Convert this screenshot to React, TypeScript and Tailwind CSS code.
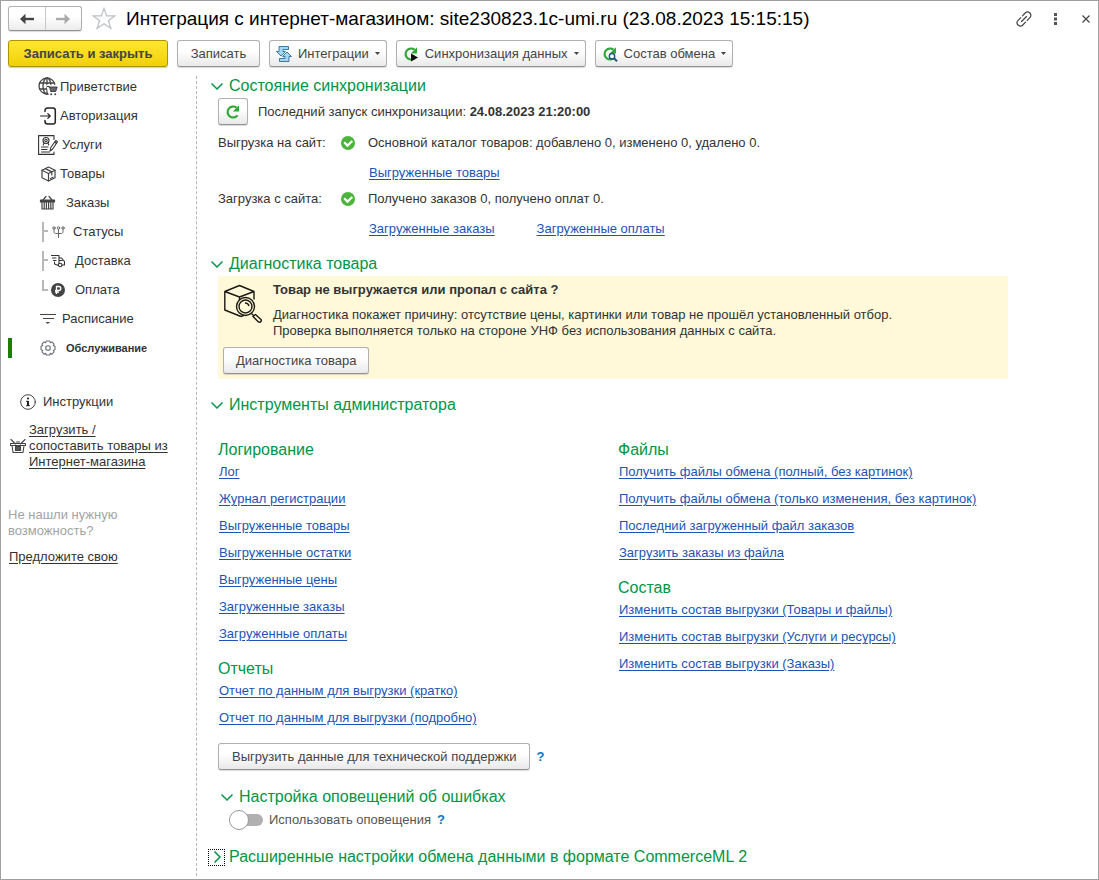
import { useState } from 'react';
import type { ReactNode } from 'react';
import { clsx } from 'clsx';

interface NavItem {
  label: string;
  icon: ReactNode;
  gap: string;
  level?: 'middle' | 'last';
  active?: boolean;
}

const iconProps = { fill: 'none', stroke: '#444', strokeLinecap: 'round', strokeLinejoin: 'round' } as const;

function GlobeCartIcon() {
  return (
    <svg className="h-5 w-5" viewBox="0 0 20 20" {...iconProps} strokeWidth={1.3} aria-hidden="true">
      <circle cx="9" cy="9" r="8" />
      <ellipse cx="9" cy="9" rx="4" ry="8" />
      <path d="M9 1v16M1.500 6h15M1.500 12h15" />
      <path d="M9 8.500h11.500v8H11z" fill="#fff" stroke="#fff" />
      <path d="M9.500 9.500h2l1.200 5h5l1.500-4.500h-6.500z" fill="#666" strokeWidth={1} />
      <circle cx="13.200" cy="17.300" r="1" fill="#444" stroke="none" />
      <circle cx="17.200" cy="17.300" r="1" fill="#444" stroke="none" />
    </svg>
  );
}

function LoginIcon() {
  return (
    <svg className="h-5 w-5" viewBox="0 0 20 20" {...iconProps} stroke="#222" strokeWidth={1.5} aria-hidden="true">
      <path d="M7 5.500V4.500A2.500 2.500 0 0 1 9.500 2H15a2.300 2.300 0 0 1 2.300 2.300v11.400A2.300 2.300 0 0 1 15 18H9.500A2.500 2.500 0 0 1 7 15.500v-1" />
      <path d="M2.500 10H12M9.800 7.600l2.400 2.400-2.400 2.400" strokeWidth={1.200} />
    </svg>
  );
}

function ServicesIcon() {
  return (
    <svg className="h-5 w-5" viewBox="0 0 20 20" {...iconProps} stroke="#333" strokeWidth={1.100} aria-hidden="true">
      <path d="M16 4.500V.6H.6v18.800H16V17" />
      <circle cx="8" cy="5.500" r="3" />
      <circle cx="8" cy="5.500" r="1.200" />
      <path d="M6 8.200 5.200 10M10 8.200l.8 1.800M3.500 12h6.500M3.500 14.500h5.500M3.500 17h8" />
      <path d="m12 16 .8-3.500 5-7 1.700 1.200-5 7.500z" fill="#fff" />
      <path d="m16.600 7 1.800 1.300" />
    </svg>
  );
}

function BoxIcon() {
  return (
    <svg className="h-5 w-5" viewBox="0 0 20 20" {...iconProps} strokeWidth={1.200} aria-hidden="true">
      <path d="m10.500 3 6.500 3.200v7.500L10.500 17 4 13.700V6.200z" />
      <path d="m4 6.200 6.500 3.300L17 6.200M10.500 9.500V17M7.300 4.600l6.500 3.300v3M12.500 14.500l2.500-1.300" />
    </svg>
  );
}

function BasketIcon() {
  return (
    <svg className="h-5 w-5" viewBox="0 0 20 20" {...iconProps} strokeWidth={1.200} aria-hidden="true">
      <path d="m5 7 3-3.500M14 7l-3-3.500" />
      <path d="M2.500 7h14v2h-14z" fill="#444" />
      <path d="M4 9v7h11V9M6.200 9v7M8.400 9v7M10.600 9v7M12.800 9v7" />
    </svg>
  );
}

function StatusesIcon() {
  return (
    <svg className="h-3.5 w-3.5" viewBox="0 0 14 14" {...iconProps} stroke="#666" strokeWidth={1} aria-hidden="true">
      <circle cx="3" cy="3" r="1.200" />
      <circle cx="7.500" cy="3" r="1.200" />
      <circle cx="12" cy="3" r="1.200" />
      <path d="M3 4.500v2c0 1.500 1 2 2 2h5c1 0 2-.5 2-2v-2M7.500 4.500v8" />
    </svg>
  );
}

function DeliveryIcon() {
  return (
    <svg className="h-3.5 w-3.5" viewBox="0 0 14 14" {...iconProps} stroke="#333" strokeWidth={1.100} aria-hidden="true">
      <path d="M.5 1.500h7.500v8M1.500 4h3.500M2.500 6.500H5M8 4h2.500l3 3.500v3.500h-2.500M8.300 6.500h3M3.500 8v2l4 1.500" />
      <circle cx="9.200" cy="11" r="1.800" />
    </svg>
  );
}

function RubleIcon() {
  return (
    <svg className="h-3.5 w-3.5" viewBox="0 0 14 14" aria-hidden="true">
      <circle cx="7" cy="7" r="7" fill="#444" />
      <path d="M5.500 11V3.500h2.300a2 2 0 0 1 0 4H4M4 9.200h4" fill="none" stroke="#fff" strokeWidth="1.300" />
    </svg>
  );
}

function ScheduleIcon() {
  return (
    <svg className="h-5 w-5" viewBox="0 0 20 20" {...iconProps} strokeLinecap="butt" strokeWidth={1.200} aria-hidden="true">
      <path d="M2 5.500h16M5 9.500h11" />
      <path d="M7.500 13h4.500l-2.200 2z" fill="#444" stroke="none" />
    </svg>
  );
}

function GearIcon() {
  return (
    <svg className="h-5 w-5" viewBox="0 0 20 20" {...iconProps} stroke="#6b6f76" strokeWidth={1.100} aria-hidden="true">
      <path d="M8.200 3h3.600l.5 1.700 1.600-.8 2.200 2.200-.8 1.600 1.700.5v3.600l-1.700.5.8 1.600-2.200 2.200-1.600-.8-.5 1.700H8.200l-.5-1.700-1.600.8-2.200-2.200.8-1.600L3 11.800V8.200l1.700-.5-.8-1.600 2.200-2.200 1.600.8z" />
      <circle cx="10" cy="10" r="2.300" />
    </svg>
  );
}

function InfoIcon() {
  return (
    <svg className="h-4 w-4" viewBox="0 0 16 16" {...iconProps} strokeWidth={1} aria-hidden="true">
      <circle cx="8" cy="8" r="7.300" />
      <path d="M8 7v5" stroke="#222" strokeWidth={2} strokeLinecap="butt" />
      <path d="M6.500 7.300H8M6.500 11.700h3" stroke="#222" />
      <circle cx="8" cy="4.500" r="1.100" fill="#222" stroke="none" />
    </svg>
  );
}

function OpenBasketIcon() {
  return (
    <svg className="h-4 w-4 shrink-0" viewBox="0 0 16 16" {...iconProps} strokeWidth={1.100} aria-hidden="true">
      <path d="m1 1.500 4.500 4.500M15 1.500l-4.500 4.500M.5 5.500h15v2H.5zM2 7.500l1 7h10l1-7" />
      <path d="M5.500 8.500h5v4h-5z" fill="#555" />
      <path d="M6.500 4h3" />
    </svg>
  );
}

function RefreshIcon({ children }: { children?: ReactNode }) {
  return (
    <svg className="h-4 w-4" viewBox="0 0 16 16" aria-hidden="true">
      <path d="M12.500 11.300A5.500 5.500 0 1 1 11.500 3.700" fill="none" stroke="#2ea836" strokeWidth="2.200" />
      <path d="M14 1.200v6.300H7.800z" fill="#2ea836" />
      {children}
    </svg>
  );
}

function IntegrationIcon() {
  return (
    <svg className="h-[18px] w-4" viewBox="0 0 16 18" aria-hidden="true" fill="#a5d6f2" stroke="#2f6d94" strokeWidth=".9">
      <path d="M3 1.500h9.500v3H7V6.500h2.500L5 11 .5 6.500H3z" />
      <path d="M13 16.500H3.500v-3H9v-2H6.500L11 7l4.500 4.500H13z" />
    </svg>
  );
}

function CheckIcon() {
  return (
    <svg className="h-3.5 w-3.5" viewBox="0 0 14 14" aria-hidden="true">
      <circle cx="7" cy="7" r="7" fill="#4db53c" />
      <path d="m3.200 6.300 3.300 3.300L11.300 5" fill="none" stroke="#fff" strokeWidth="2.200" />
    </svg>
  );
}

function BoxSearchIcon() {
  return (
    <svg className="h-10 w-10 shrink-0" viewBox="0 0 40 40" fill="none" stroke="#1c1a12" strokeWidth="1.400" strokeLinejoin="round" aria-hidden="true">
      <path d="M18 32.500 1.800 26V7.500L16.500 1.500l14.500 6v8M1.800 7.500 16.500 13 31 7.500M16.500 13v3M18 32.500l3-1.200" />
      <circle cx="22.500" cy="22.500" r="9" />
      <circle cx="22.500" cy="22.500" r="6.500" />
      <path d="M22 19c2 0 3.500 1 4 3M28.500 29.500l2.500 2.500" />
      <path d="m30 32.500 2.500-2 5.500 5c1 1.500-1 3.500-2.500 2.500z" />
    </svg>
  );
}

function TreeBranch({ last }: { last: boolean }) {
  return (
    <svg className="h-5 w-[9px]" viewBox="0 0 9 20" fill="none" stroke="#b8b8b8" strokeWidth="2" aria-hidden="true">
      <path d={last ? 'M1 0v10h5' : 'M1 0v20M1 9h5'} />
    </svg>
  );
}

const NAV: NavItem[] = [
  { label: 'Приветствие', icon: <GlobeCartIcon />, gap: 'gap-0.5' },
  { label: 'Авторизация', icon: <LoginIcon />, gap: 'gap-0.5' },
  { label: 'Услуги', icon: <ServicesIcon />, gap: 'gap-1' },
  { label: 'Товары', icon: <BoxIcon />, gap: 'gap-0.5' },
  { label: 'Заказы', icon: <BasketIcon />, gap: 'gap-2' },
  { label: 'Статусы', icon: <StatusesIcon />, gap: 'gap-2', level: 'middle' },
  { label: 'Доставка', icon: <DeliveryIcon />, gap: 'gap-2.5', level: 'middle' },
  { label: 'Оплата', icon: <RubleIcon />, gap: 'gap-2.5', level: 'last' },
  { label: 'Расписание', icon: <ScheduleIcon />, gap: 'gap-1' },
  { label: 'Обслуживание', icon: <GearIcon />, gap: 'gap-2', active: true },
];

const LOGS = ['Лог', 'Журнал регистрации', 'Выгруженные товары', 'Выгруженные остатки', 'Выгруженные цены', 'Загруженные заказы', 'Загруженные оплаты'];
const REPORTS = ['Отчет по данным для выгрузки (кратко)', 'Отчет по данным для выгрузки (подробно)'];
const FILES = [
  'Получить файлы обмена (полный, без картинок)',
  'Получить файлы обмена (только изменения, без картинок)',
  'Последний загруженный файл заказов',
  'Загрузить заказы из файла',
];
const CONTENTS = ['Изменить состав выгрузки (Товары и файлы)', 'Изменить состав выгрузки (Услуги и ресурсы)', 'Изменить состав выгрузки (Заказы)'];

function Button({ children, className, menu, label }: { children: ReactNode; className?: string; menu?: boolean; label?: string }) {
  return (
    <button
      type="button"
      aria-label={label}
      aria-haspopup={menu ? 'menu' : undefined}
      className={clsx(
        'flex h-[27px] items-center justify-center rounded-[3px] border border-[#b0b0b0] border-b-[#929292] bg-linear-to-b from-white from-40% to-[#e9e9e9] text-[13px] text-[#444] shadow-[0_1px_1px_#00000026] whitespace-nowrap cursor-pointer',
        className,
      )}
    >
      {children}
      {menu && (
        <svg className="ml-1.5 h-[3px] w-[5px]" viewBox="0 0 5 3" aria-hidden="true">
          <path d="M0 0h5L2.500 3z" fill="#444" />
        </svg>
      )}
    </button>
  );
}

function Link({ children }: { children: ReactNode }) {
  return (
    <a href="#" className="text-[#1b54b5] underline underline-offset-2">
      {children}
    </a>
  );
}

function LinkGroup({ title, links }: { title: string; links: string[] }) {
  return (
    <section>
      <h3 className="text-base leading-4 text-[#009646]">{title}</h3>
      <ul className="pl-px">
        {links.map(text => (
          <li key={text} className="leading-[27px]">
            <Link>{text}</Link>
          </li>
        ))}
      </ul>
    </section>
  );
}

interface SectionProps {
  title: string;
  children?: ReactNode;
  className?: string;
  defaultOpen?: boolean;
  focused?: boolean;
}

function Section({ title, children, className, defaultOpen = true, focused = false }: SectionProps) {
  const [open, setOpen] = useState(defaultOpen);

  return (
    <section className={className}>
      <h2 className="text-base leading-5 text-[#009646]">
        <button type="button" aria-expanded={open} onClick={() => setOpen(!open)} className="flex items-center gap-1 text-left cursor-pointer">
          <span className={clsx('flex size-[17px] items-center justify-center', focused && 'border border-dotted border-black')}>
            <svg className={clsx('h-3 w-3 shrink-0', !open && '-rotate-90')} viewBox="0 0 12 12" fill="none" stroke="#009646" strokeWidth="1.500" aria-hidden="true">
              <path d="m.5 3.500 5.500 5.500 5.500-5.500" />
            </svg>
          </span>
          {title}
        </button>
      </h2>
      {open && children}
    </section>
  );
}

function Header() {
  return (
    <header className="flex items-center pt-[5px] pr-2 pl-[7px]">
      <div className="flex h-[25px] w-[74px] shrink-0 rounded-[3px] border border-[#b0b0b0] border-b-[#929292] bg-linear-to-b from-white from-40% to-[#ececec] shadow-[0_1px_1px_#00000026]">
        <button type="button" aria-label="Назад" className="flex flex-1 items-center justify-center border-r border-[#c8c8c8] cursor-pointer">
          <svg className="h-3 w-4" viewBox="0 0 16 12" fill="none" stroke="#444" strokeWidth="2.400" aria-hidden="true">
            <path d="M15 6H3" />
            <path d="M6.500.8v10.400L1 6z" fill="#444" stroke="none" />
          </svg>
        </button>
        <button type="button" aria-label="Вперед" className="flex flex-1 items-center justify-center cursor-pointer">
          <svg className="h-3 w-4" viewBox="0 0 16 12" fill="none" stroke="#aaa" strokeWidth="2.400" aria-hidden="true">
            <path d="M1 6h12" />
            <path d="M9.500.8v10.400L15 6z" fill="#aaa" stroke="none" />
          </svg>
        </button>
      </div>
      <button type="button" aria-label="В избранное" className="ml-2.5 cursor-pointer">
        <svg className="h-6 w-6" viewBox="0 0 24 24" fill="none" stroke="#bcc0c4" strokeWidth="1.200" aria-hidden="true">
          <path d="m12 1.500 2.700 7.300h8.300l-6.600 4.900 2.500 7.600L12 16.800l-6.900 4.500 2.500-7.600L1 8.800h8.300z" />
        </svg>
      </button>
      <h1 className="ml-2.5 flex-1 text-[19px] leading-[25px] text-black">Интеграция с интернет-магазином: site230823.1c-umi.ru (23.08.2023 15:15:15)</h1>
      <div className="flex items-center gap-5">
        <button type="button" aria-label="Получить ссылку" className="cursor-pointer">
          <svg className="h-4 w-4" viewBox="0 0 16 16" fill="none" stroke="#444" strokeWidth="1.200" strokeLinecap="round" aria-hidden="true">
            <path d="M6.500 4.800 9.200 2a3.300 3.300 0 0 1 4.700 4.700l-2.700 2.700M9.500 11.200 6.800 14a3.300 3.300 0 0 1-4.700-4.700l2.700-2.700M5.500 10.500l5-5" />
          </svg>
        </button>
        <button type="button" aria-label="Ещё" className="pr-[5px] pl-0.5 cursor-pointer">
          <svg className="h-3 w-[3px]" viewBox="0 0 3 12" fill="#555" aria-hidden="true">
            <path d="M0 0h3v3H0zM0 4.500h3v3H0zM0 9h3v3H0z" />
          </svg>
        </button>
        <button type="button" aria-label="Закрыть" className="cursor-pointer">
          <svg className="h-2 w-2" viewBox="0 0 8 8" stroke="#444" strokeWidth="1.200" aria-hidden="true">
            <path d="m.5.5 7 7M7.500.5l-7 7" />
          </svg>
        </button>
      </div>
    </header>
  );
}

function Toolbar() {
  return (
    <div className="mt-[9px] flex flex-wrap gap-[9px] px-[7px]">
      <button
        type="button"
        className="h-[27px] w-40 rounded-[3px] border border-[#a89600] bg-linear-to-b from-[#ffe72e] to-[#f0d000] text-[13px] font-bold text-[#444] shadow-[0_1px_1px_#00000033] cursor-pointer"
      >
        Записать и закрыть
      </button>
      <Button className="w-[83px]">Записать</Button>
      <Button menu className="px-1.5">
        <IntegrationIcon />
        <span className="ml-1.5">Интеграции</span>
      </Button>
      <Button menu className="px-1.5">
        <RefreshIcon>
          <path d="m8 7.500 7 4-7 4z" fill="#111" />
        </RefreshIcon>
        <span className="ml-1.5">Синхронизация данных</span>
      </Button>
      <Button menu className="px-1.5">
        <RefreshIcon>
          <circle cx="10" cy="10.200" r="2.700" fill="#fff" stroke="#1d5580" strokeWidth="1.400" />
          <path d="m12 12.200 3 3" stroke="#1d5580" strokeWidth="2" />
        </RefreshIcon>
        <span className="ml-1.5">Состав обмена</span>
      </Button>
    </div>
  );
}

function Sidebar() {
  return (
    <aside className="w-[196px] shrink-0 border-r border-dashed border-[#b5b5b5] pl-[7px]">
      <nav className="-mt-1">
        <ul>
          {NAV.map(item => (
            <li key={item.label} className="flex h-[29px] items-center">
              <span className={clsx('h-5 w-1', item.active && 'bg-[#1f7d00]')} />
              <a href="#" aria-current={item.active ? 'page' : undefined} className={clsx('flex items-center', item.gap, item.level ? 'ml-[30px]' : 'ml-[26px]')}>
                {item.level ? (
                  <span className="flex items-center">
                    <TreeBranch last={item.level === 'last'} />
                    {item.icon}
                  </span>
                ) : (
                  item.icon
                )}
                <span className={clsx(item.active && 'text-[11px] font-bold')}>{item.label}</span>
              </a>
            </li>
          ))}
        </ul>
      </nav>
      <a href="#" className="mt-[30px] ml-3 flex items-center gap-[7px]">
        <InfoIcon />
        Инструкции
      </a>
      <a href="#" className="mt-2.5 flex items-center gap-[3px] pl-0.5 leading-4 underline underline-offset-2">
        <OpenBasketIcon />
        <span>
          Загрузить /<br />
          сопоставить товары из
          <br />
          Интернет-магазина
        </span>
      </a>
      <p className="mt-[37px] leading-4 text-[#a3a3a3]">
        Не нашли нужную
        <br />
        возможность?
      </p>
      <a href="#" className="mt-2 ml-px inline-block underline underline-offset-2">
        Предложите свою
      </a>
    </aside>
  );
}

function SyncStatus() {
  return (
    <div className="pl-2.5">
      <div className="mt-0.5 flex items-center gap-2.5">
        <Button label="Обновить" className="w-[30px]">
          <RefreshIcon />
        </Button>
        <p>
          Последний запуск синхронизации: <b>24.08.2023 21:20:00</b>
        </p>
      </div>
      <dl className="mt-2 grid grid-cols-[123px_1fr] gap-y-1.5">
        <dt>Выгрузка на сайт:</dt>
        <dd>
          <p className="flex items-center gap-[13px]">
            <CheckIcon />
            Основной каталог товаров: добавлено 0, изменено 0, удалено 0.
          </p>
          <p className="mt-2.5 pl-7">
            <Link>Выгруженные товары</Link>
          </p>
        </dd>
        <dt>Загрузка с сайта:</dt>
        <dd>
          <p className="flex items-center gap-[13px]">
            <CheckIcon />
            Получено заказов 0, получено оплат 0.
          </p>
          <p className="mt-2.5 flex gap-[42px] pl-7">
            <Link>Загруженные заказы</Link>
            <Link>Загруженные оплаты</Link>
          </p>
        </dd>
      </dl>
    </div>
  );
}

function Diagnostics() {
  return (
    <div className="mt-0.5 ml-2.5 max-w-[790px] bg-[#fff9d9] px-[5px] py-[5px]">
      <div className="flex gap-2.5">
        <div className="pt-[3px]">
          <BoxSearchIcon />
        </div>
        <div>
          <h3 className="font-bold leading-[18px]">Товар не выгружается или пропал с сайта ?</h3>
          <p className="mt-2 leading-4">
            Диагностика покажет причину: отсутствие цены, картинки или товар не прошёл установленный отбор.
            <br />
            Проверка выполняется только на стороне УНФ без использования данных с сайта.
          </p>
        </div>
      </div>
      <Button className="mt-2 px-3">Диагностика товара</Button>
    </div>
  );
}

function AdminTools() {
  const [notify, setNotify] = useState(false);

  return (
    <div className="pl-2.5">
      <div className="mt-[27px] grid max-w-[800px] grid-cols-2">
        <div className="flex flex-col gap-3.5">
          <LinkGroup title="Логирование" links={LOGS} />
          <LinkGroup title="Отчеты" links={REPORTS} />
        </div>
        <div className="flex flex-col gap-3.5">
          <LinkGroup title="Файлы" links={FILES} />
          <LinkGroup title="Состав" links={CONTENTS} />
        </div>
      </div>
      <div className="mt-3 flex items-center gap-1.5">
        <Button className="px-[13px]">Выгрузить данные для технической поддержки</Button>
        <button type="button" aria-label="Справка" className="font-bold text-[#0a76c4] cursor-pointer">
          ?
        </button>
      </div>
      <Section title="Настройка оповещений об ошибках" className="mt-[17px]">
        <div className="mt-[3px] flex items-center gap-1.5 pl-[11px]">
          <label className="flex items-center gap-1.5">
            <input
              type="checkbox"
              role="switch"
              checked={notify}
              onChange={e => setNotify(e.target.checked)}
              className="flex h-5 w-[34px] appearance-none items-center before:relative before:z-10 before:size-5 before:rounded-full before:border before:border-[#999] before:bg-white before:content-[''] after:-ml-2 after:h-3 after:flex-1 after:rounded-r-md after:bg-[#b0b0b0] after:content-[''] checked:flex-row-reverse checked:after:bg-[#009646]"
            />
            <span className="text-[#555]">Использовать оповещения</span>
          </label>
          <button type="button" aria-label="Справка" className="font-bold text-[#0a76c4] cursor-pointer">
            ?
          </button>
        </div>
      </Section>
    </div>
  );
}

export default function App() {
  return (
    <div className="flex min-h-screen flex-col border border-[#a0a0a0] bg-white font-['Liberation_Sans',Arial,sans-serif] text-[13px] leading-5 text-[#333]">
      <Header />
      <Toolbar />
      <div className="mt-[9px] flex flex-1 pb-[3px]">
        <Sidebar />
        <main className="min-w-0 flex-1 pl-[11px]">
          <Section title="Состояние синхронизации">
            <SyncStatus />
          </Section>
          <Section title="Диагностика товара" className="mt-[15px]">
            <Diagnostics />
          </Section>
          <Section title="Инструменты администратора" className="mt-4">
            <AdminTools />
          </Section>
          <Section title="Расширенные настройки обмена данными в формате CommerceML 2" className="mt-[17px]" defaultOpen={false} focused />
        </main>
      </div>
    </div>
  );
}
